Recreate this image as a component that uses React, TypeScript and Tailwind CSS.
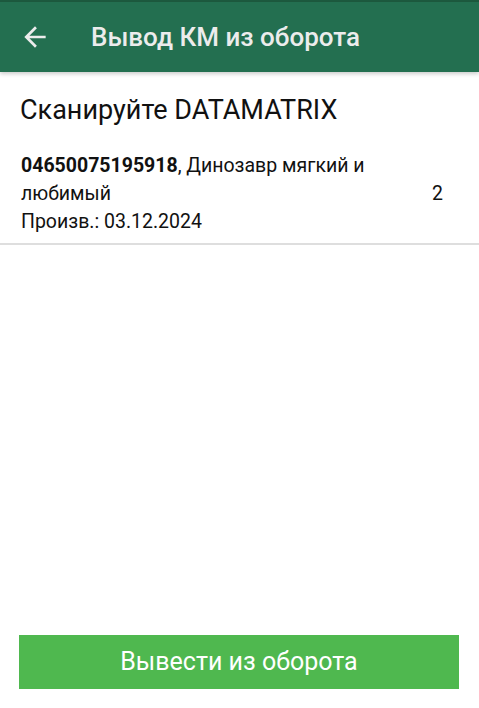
import React from "react";

export default function App() {
  return (
    <div className="w-[479px] h-[708px] bg-white flex flex-col" style={{ fontFamily: "Roboto, 'Noto Sans', sans-serif" }}>
      <div className="h-[2px] bg-[#1d5a3f]" />
      <div className="h-[70px] bg-[#236f50] flex items-center shadow-[0_2px_4px_rgba(0,0,0,0.2)] relative z-10">
        <div className="w-[72px] flex items-center pl-[19px]">
          <svg width="32" height="32" viewBox="0 0 24 24">
            <path d="M20 11H7.83l5.59-5.59L12 4l-8 8 8 8 1.41-1.41L7.83 13H20v-2z" fill="#ececec" />
          </svg>
        </div>
        <div className="pl-[19px] text-[26px] font-medium text-[#ececec]">Вывод КМ из оборота</div>
      </div>
      <div className="pl-[20px] pt-[22px] text-[27px] text-[#111] leading-[32px]">Сканируйте DATAMATRIX</div>
      <div className="mt-[26px] flex items-center pl-[21px] pr-[36px] pb-[7px] border-b-2 border-[#dedede]">
        <div className="flex-1 text-[19.5px] leading-[28px] text-[#111]">
          <div><span className="font-bold">04650075195918</span>, Динозавр мягкий и</div>
          <div>любимый</div>
          <div>Произв.: 03.12.2024</div>
        </div>
        <div className="text-[19.5px] text-[#111]">2</div>
      </div>
      <div className="flex-1" />
      <div className="pb-[19px] pl-[19px] pr-[20px]">
        <div className="h-[54px] bg-[#4fb84f] flex items-center justify-center text-white text-[25px]">Вывести из оборота</div>
      </div>
    </div>
  );
}
